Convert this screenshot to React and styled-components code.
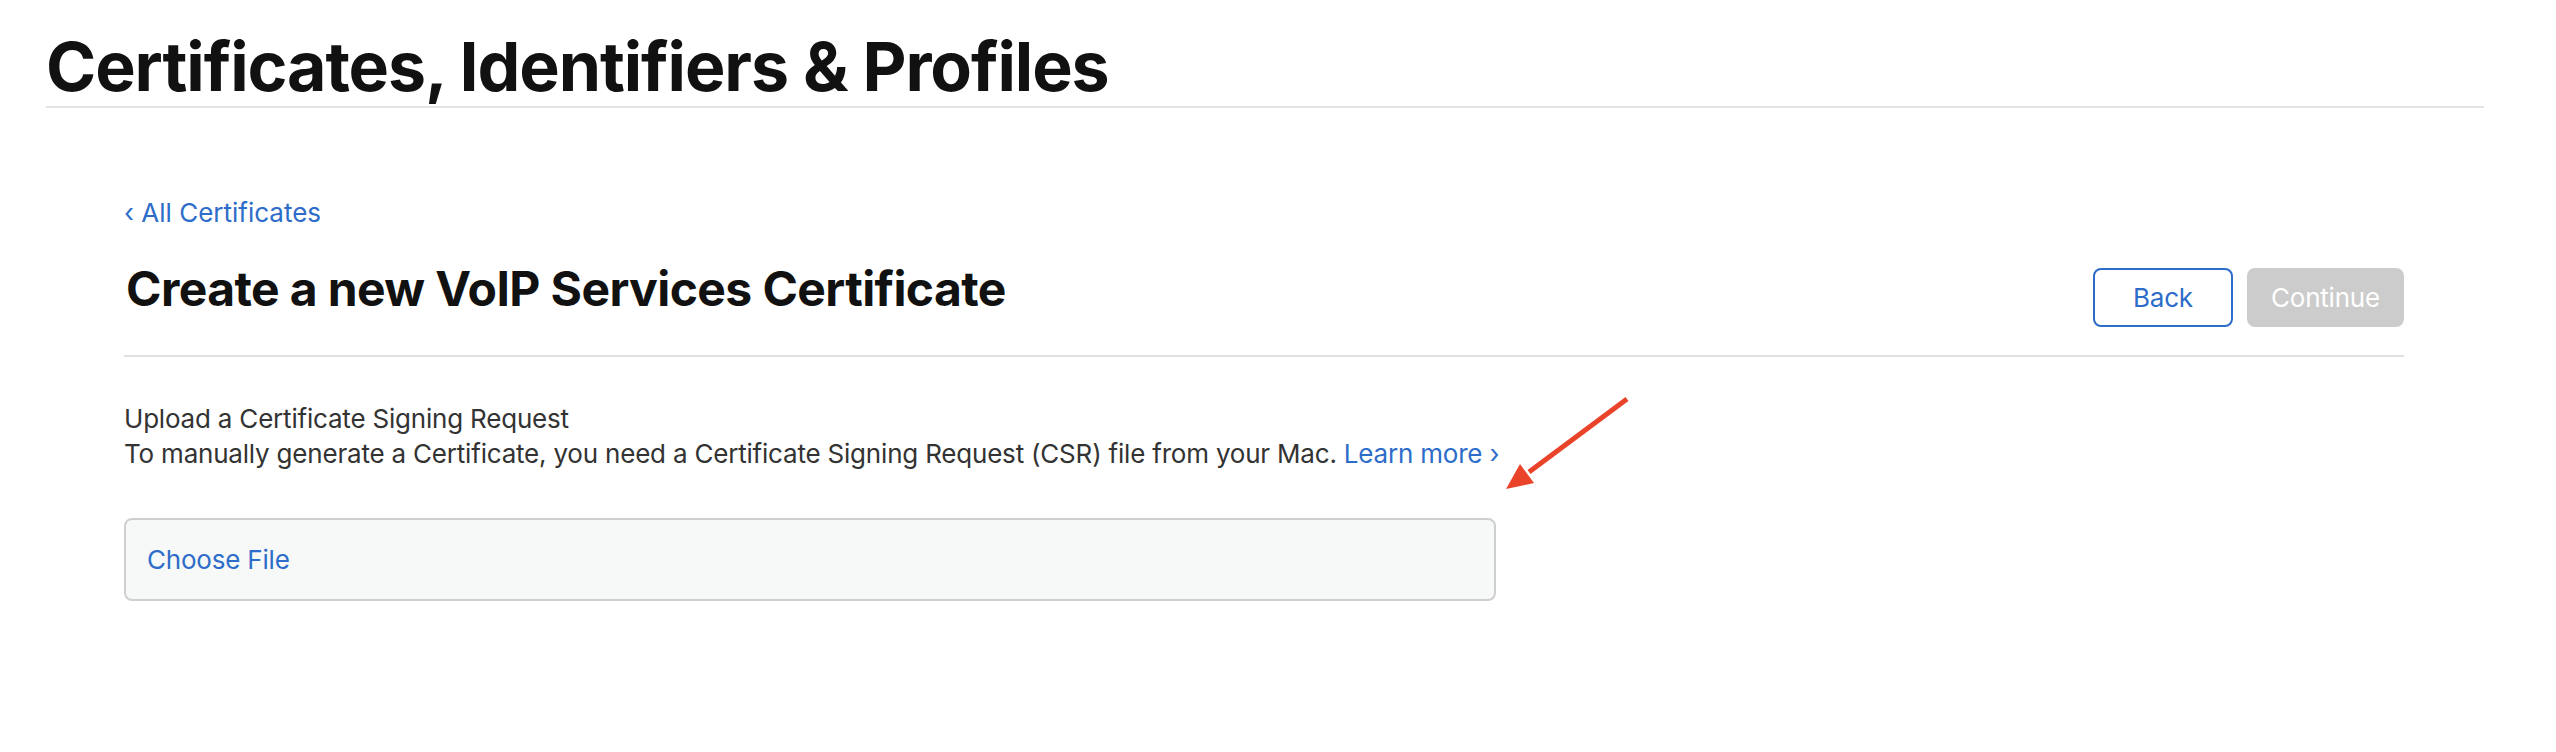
import React from "react";
import styled, { createGlobalStyle } from "styled-components";

const Global = createGlobalStyle`
  html, body { margin: 0; padding: 0; background: #fff; }
  body { font-family: "Inter", "Noto Sans", "Liberation Sans", sans-serif; color: #333; }
  * { box-sizing: border-box; }
`;

const Page = styled.div`
  position: relative;
  width: 2556px;
  min-height: 752px;
  padding-top: 32px;
`;

const Header = styled.header`
  margin: 0 72px 0 46px;
  padding-bottom: 6px;
  border-bottom: 2px solid #e3e3e3;
`;

const PageTitle = styled.h1`
  margin: 0;
  font-size: 68px;
  line-height: 68px;
  font-weight: 700;
  color: #111;
  letter-spacing: -1.1px;
`;

const Content = styled.main`
  width: 2280px;
  margin: 88px 0 0 124px;
`;

const Breadcrumb = styled.a`
  display: inline-block;
  font-size: 26px;
  line-height: 34px;
  color: #2d6dc9;
  text-decoration: none;
`;

const TitleRow = styled.div`
  display: flex;
  justify-content: space-between;
  align-items: flex-start;
  margin-top: 31px;
  padding-bottom: 28px;
  border-bottom: 2px solid #e0e0e0;
`;

const SectionTitle = styled.h2`
  margin: 0;
  font-size: 48px;
  line-height: 56px;
  font-weight: 700;
  color: #111;
  letter-spacing: -0.6px;
  padding-left: 2px;
`;

const Actions = styled.div`
  display: flex;
  gap: 14px;
  margin-top: 7px;
`;

const Button = styled.button`
  min-width: 140px;
  height: 59px;
  padding: 0 22px;
  border-radius: 8px;
  font-family: inherit;
  font-size: 26px;
  letter-spacing: -0.2px;
  border: 2px solid ${(p) => (p.$disabled ? "#cccccc" : "#2d6dc9")};
  background: ${(p) => (p.$disabled ? "#cccccc" : "#fff")};
  color: ${(p) => (p.$disabled ? "#fff" : "#2d6dc9")};
  cursor: ${(p) => (p.$disabled ? "default" : "pointer")};
`;

const Section = styled.section`
  margin-top: 44px;
`;

const Label = styled.p`
  margin: 0;
  font-size: 26px;
  line-height: 35px;
  color: #333;
  letter-spacing: -0.2px;
`;

const Link = styled.a`
  color: #2d6dc9;
  text-decoration: none;
`;

const FileBox = styled.div`
  display: flex;
  align-items: center;
  width: 1372px;
  height: 83px;
  margin-top: 47px;
  padding: 0 21px;
  background: #f7f8f8;
  border: 2px solid #cfcfcf;
  border-radius: 8px;
`;

const FileLink = styled.span`
  font-size: 26px;
  line-height: 34px;
  color: #2d6dc9;
  letter-spacing: -0.2px;
`;

const Annotation = styled.svg`
  position: absolute;
  left: 1490px;
  top: 390px;
  width: 150px;
  height: 110px;
  overflow: visible;
`;

export default function App() {
  return (
    <>
      <Global />
      <Page>
        <Header>
          <PageTitle>Certificates, Identifiers &amp; Profiles</PageTitle>
        </Header>
        <Content>
          <Breadcrumb href="#">‹ All Certificates</Breadcrumb>
          <TitleRow>
            <SectionTitle>Create a new VoIP Services Certificate</SectionTitle>
            <Actions>
              <Button>Back</Button>
              <Button $disabled>Continue</Button>
            </Actions>
          </TitleRow>
          <Section>
            <Label>Upload a Certificate Signing Request</Label>
            <Label>
              To manually generate a Certificate, you need a Certificate Signing Request (CSR) file from your Mac.{" "}
              <Link href="#">Learn more ›</Link>
            </Label>
            <FileBox>
              <FileLink>Choose File</FileLink>
            </FileBox>
          </Section>
        </Content>
        <Annotation viewBox="0 0 150 110">
          <line x1="137" y1="9" x2="39" y2="82" stroke="#e9432a" strokeWidth="5" />
          <polygon points="16,99 30,74 44,93" fill="#e9432a" />
        </Annotation>
      </Page>
    </>
  );
}
